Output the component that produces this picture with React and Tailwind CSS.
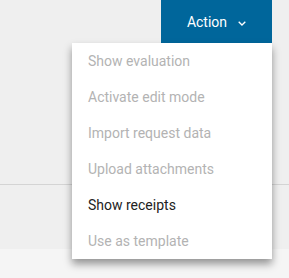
import React from 'react';

const items = [
  { label: 'Show evaluation', enabled: false },
  { label: 'Activate edit mode', enabled: false },
  { label: 'Import request data', enabled: false },
  { label: 'Upload attachments', enabled: false },
  { label: 'Show receipts', enabled: true },
  { label: 'Use as template', enabled: false },
];

const App = () => {
  return (
    <div
      className="relative w-[289px] h-[278px] overflow-hidden bg-[#efefef] flex flex-col"
      style={{ fontFamily: 'Roboto, "Liberation Sans", sans-serif' }}
    >
      {/* Toolbar */}
      <div className="h-[185px] border-b border-[#d4d4d4] flex justify-end items-start pr-[17px]">
        <button className="w-[111px] h-[43px] bg-[#00669b] text-white text-[14px] flex items-center justify-center gap-[11px] pt-[2px]">
          <span>Action</span>
          <svg width="8" height="5" viewBox="0 0 8 5" className="mt-[1px]">
            <path d="M0.7 0.7l3.3 3.3 3.3-3.3" fill="none" stroke="#fff" strokeWidth="1.3" />
          </svg>
        </button>
      </div>
      <div className="h-[64px]"></div>
      <div className="flex-1 bg-[#f5f5f5]"></div>

      {/* Dropdown menu */}
      <div className="absolute left-[72px] top-[43px] w-[200px] bg-white shadow-[0_5px_8px_rgba(0,0,0,0.4)] flex flex-col">
        {items.map((item) => (
          <div
            key={item.label}
            className={`h-9 flex items-center pl-4 text-[14px] ${item.enabled ? 'text-[#222222]' : 'text-[#b3b3b3]'}`}
          >
            {item.label}
          </div>
        ))}
      </div>
    </div>
  );
};

export default App;
